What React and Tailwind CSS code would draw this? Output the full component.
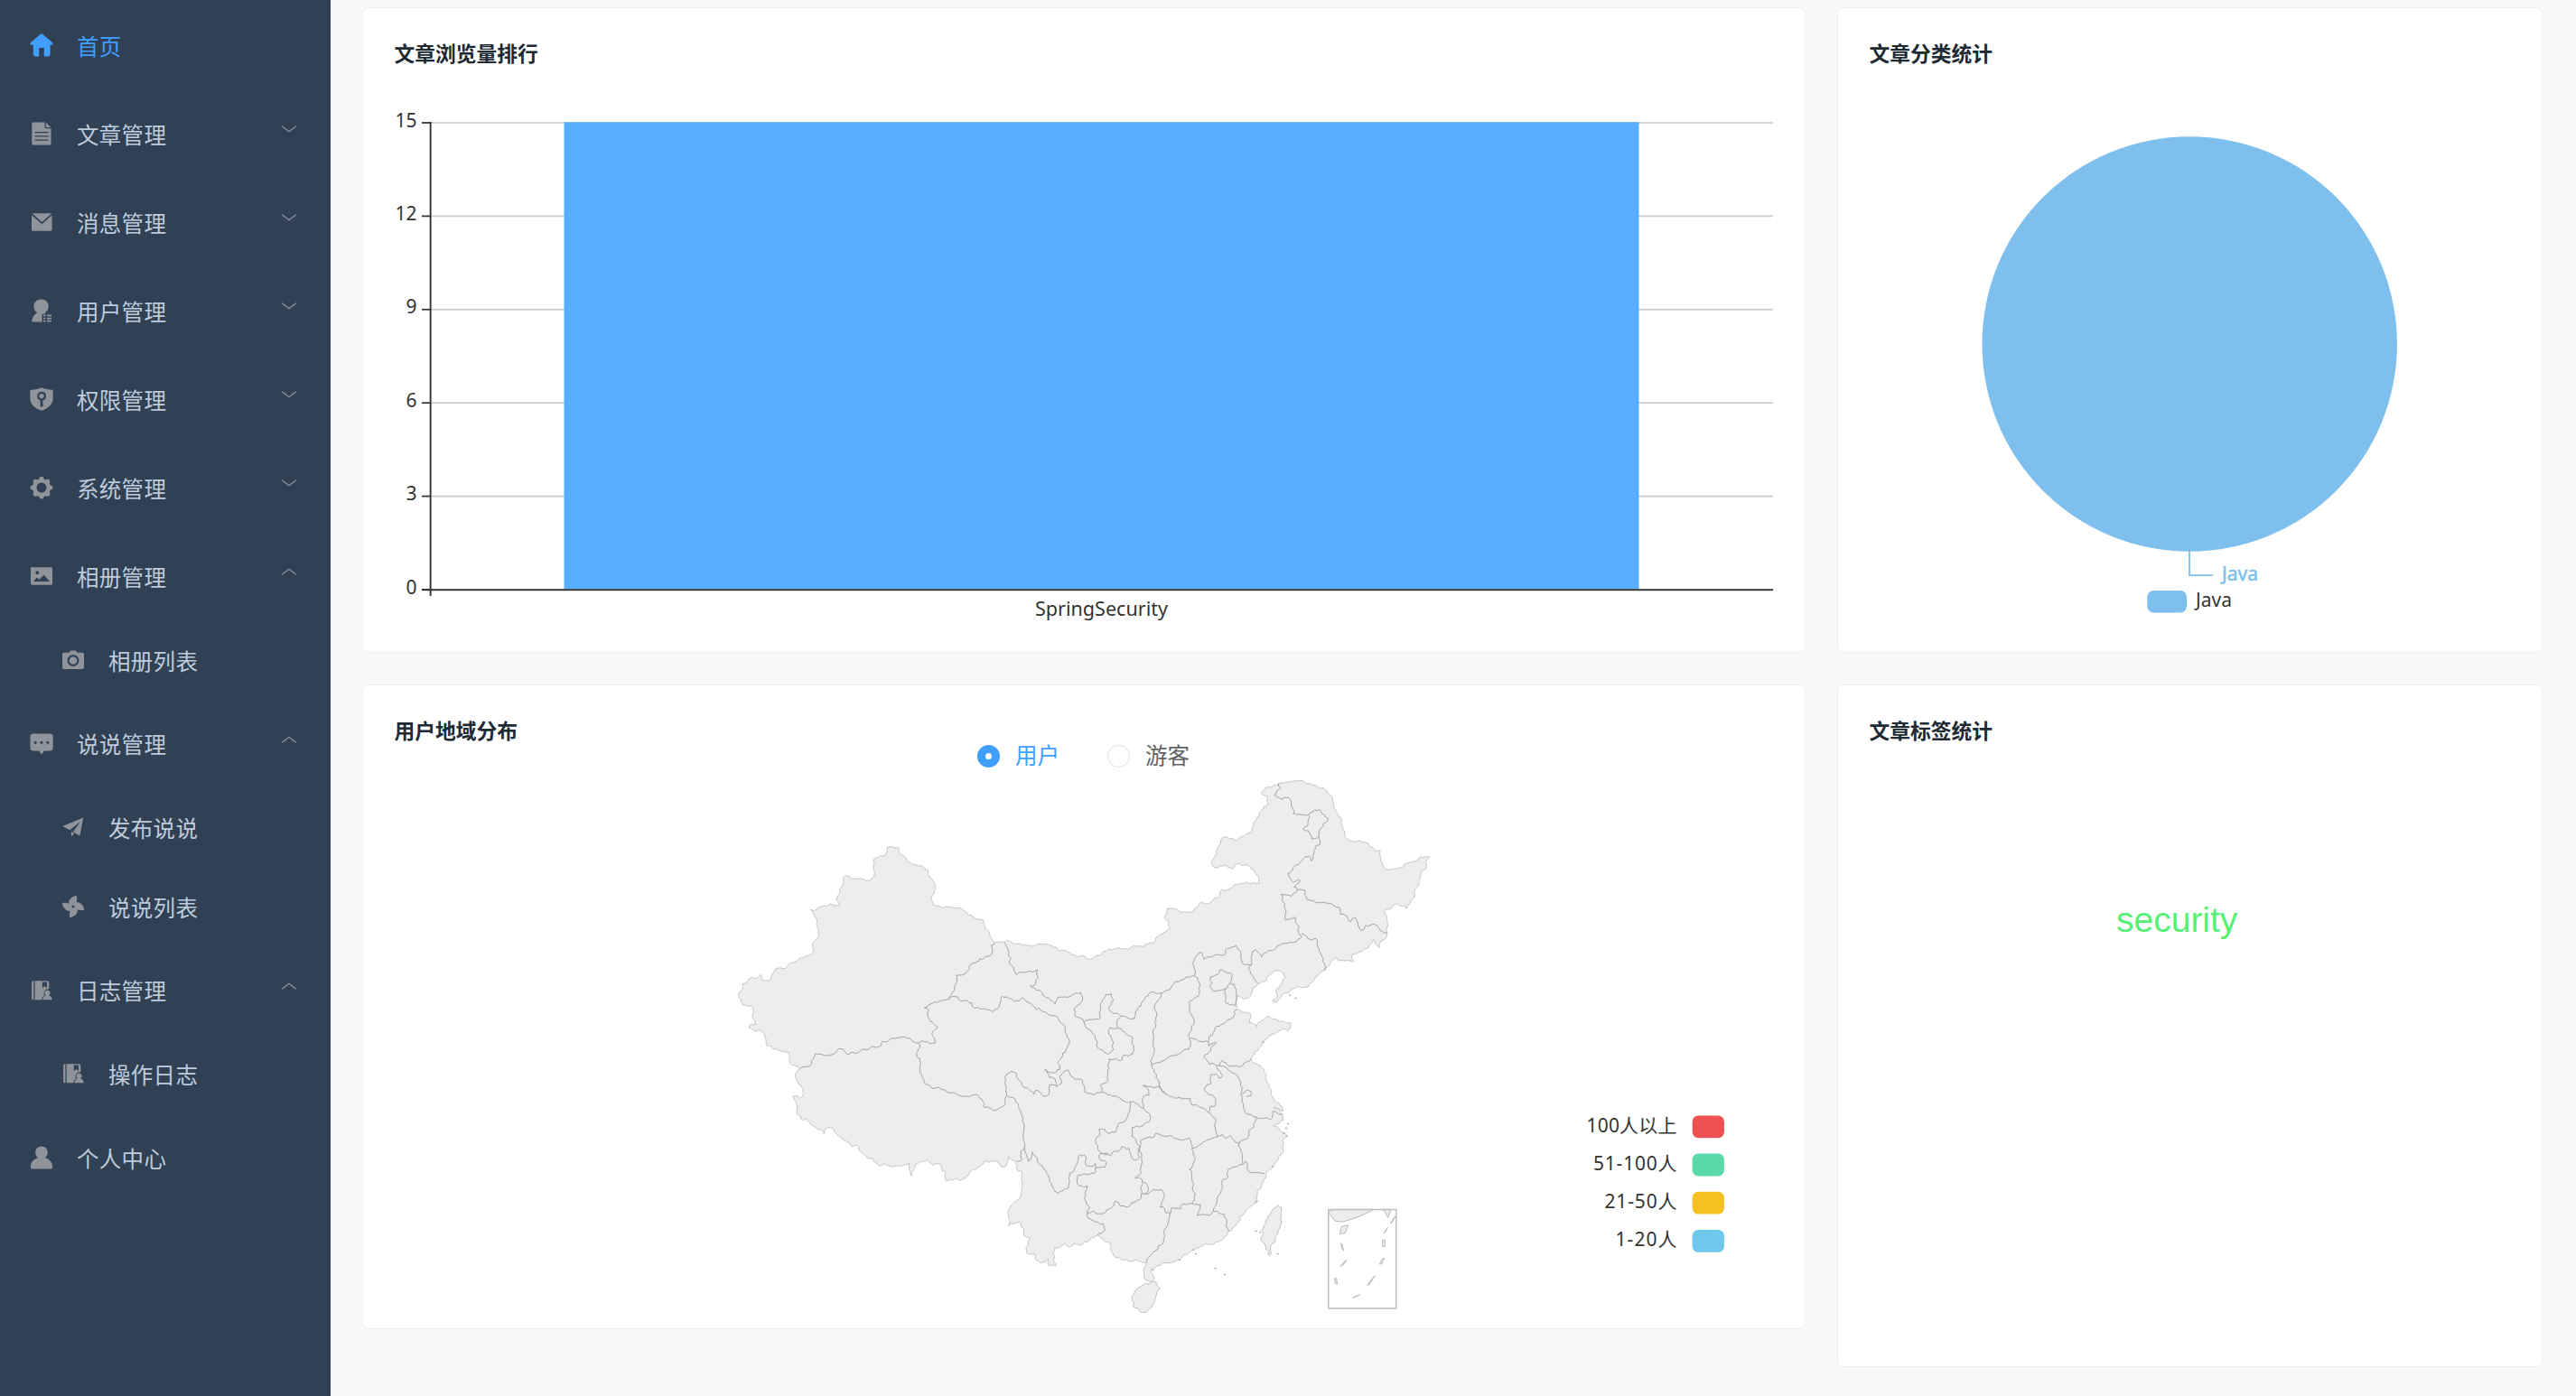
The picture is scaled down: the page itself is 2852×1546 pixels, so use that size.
import React from "react";

const CJK = "font-['Noto_Sans','Noto_Sans_CJK_SC',sans-serif]";

/* ---------- sidebar icons (26 x 26 grid) ---------- */
const icons = {
  home: (
    <path d="M11.6.9a2 2 0 0 1 2.8 0l10.8 9.3c.7.9.3 2.3-.9 2.5h-1.7v10.1c0 1.6-1 2.7-2.6 2.7h-4.2v-9.4h-5.600v9.400H6.400c-1.600 0-2.600-1.100-2.600-2.700V12.700H1.800c-1.200-.2-1.700-1.600-.9-2.500z" />
  ),
  doc: (
    <path fillRule="evenodd" d="M3.600.5h12.900v4.800c0 1.200.8 2 2 2h5V24c0 .8-.6 1.500-1.400 1.500H3.700c-.8 0-1.400-.7-1.400-1.500V2c0-.8.5-1.500 1.300-1.500zM5.600 11v1.200h15V11zm0 4.300v1.200h15v-1.200zm0 4.300v1.200h15v-1.200zM17.800.7l5.400 5.200h-4.400c-.6 0-1-.4-1-1z" />
  ),
  mail: (
    <path d="M2.600 3.300h21.800L13.500 12.900zM2 5.200l11.500 10.100L24.500 5.200v16c0 .9-.6 1.500-1.500 1.500H3.500c-.9 0-1.500-.6-1.500-1.500z" />
  ),
  userList: (
    <path d="M12.600.4c4.700 0 8.200 3.300 8.200 7.700 0 2.900-1.400 5.700-3.800 7.200v1.300h-1.700c-1.300 0-2 .9-1.700 2.100l.3 1-.7 1.500.8 1.200-.6 1.200.4 1.900H2.300c.2-4.600 2.500-8.500 5.900-10.200-2.300-1.400-3.800-4.200-3.800-7.200 0-4.400 3.500-7.700 8.200-7.700zM15 17.600h2.500v1.700H15zm4 0h5v1.700h-5zm-4 3.100h2.500v1.700H15zm4 0h5v1.700h-5zm-4 3.100h2.500v1.700H15zm4 0h5v1.700h-5z" />
  ),
  shield: (
    <path fillRule="evenodd" d="M13 .2c3.500 1.500 7.600 2.300 12 2.500.4 0 .6.300.6.700v9.200c0 6-5.200 11-12.600 13.100C5.600 23.600.4 18.600.4 12.600V3.400c0-.4.200-.7.600-.7C5.400 2.500 9.500 1.700 13 .2zm0 4.500a5 5 0 0 0-1.400 9.700v7h1.700l2.100-1.500-1.300-1.400.3-.8v-3.200A5 5 0 0 0 13 4.700zm0 2.200a2.700 2.700 0 1 1 0 5.400 2.700 2.700 0 0 1 0-5.400z" />
  ),
  gear: (
    <path fillRule="evenodd" d="M10.700 2.300c.5-2 4.100-2 4.600 0 .5 1.900 2 2.500 3.700 1.700 1.800-.9 4 1.300 3.200 3.100-.8 1.800 0 3.300 1.700 3.700 2.100.5 2.100 3.900 0 4.400-1.700.5-2.500 2-1.700 3.700.9 2-1.300 4.600-3.200 3.700-1.700-.8-3.200 0-3.700 1.500-.5 1.900-4.100 1.900-4.600 0-.5-1.500-2-2.300-3.700-1.500-1.900.9-4.100-1.700-3.200-3.700.8-1.700 0-3.200-1.700-3.700-2.100-.5-2.100-3.900 0-4.400 1.700-.4 2.500-1.900 1.700-3.700C3 5.300 5.200 3.100 7 4c1.700.8 3.200.2 3.700-1.700zM13 7.500a5.500 5.500 0 1 0 0 11 5.500 5.500 0 0 0 0-11z" />
  ),
  image: (
    <path fillRule="evenodd" d="M2.200 3.300h21.600c.7 0 1.200.5 1.200 1.200v17c0 .7-.5 1.200-1.200 1.200H2.200c-.7 0-1.200-.5-1.200-1.200v-17c0-.7.500-1.200 1.200-1.200zm6.100 4a1.900 1.900 0 1 0 0 3.800 1.900 1.900 0 0 0 0-3.800zM4 19h18l-6.300-7.300-5.300 5-2.600-2.300z" />
  ),
  camera: (
    <path fillRule="evenodd" d="M8.500 4.700 9.700 3c.3-.4.700-.6 1.200-.6h4.200c.5 0 .9.200 1.200.6l1.200 1.700H23c1.100 0 2 .9 2 2v14.400c0 1.100-.9 2-2 2H3c-1.100 0-2-.9-2-2V6.700c0-1.100.9-2 2-2zM13 7a6.500 6.500 0 1 0 0 13 6.500 6.500 0 0 0 0-13zm0 2.200a4.300 4.300 0 1 1 0 8.600 4.300 4.300 0 0 1 0-8.600z" />
  ),
  chat: (
    <path fillRule="evenodd" d="M3.500 1.600h19.200c1.700 0 3 1.300 3 3v13c0 1.700-1.300 3-3 3h-6.600L13 24.400l-3.100-3.800H3.500c-1.700 0-3-1.300-3-3v-13c0-1.700 1.300-3 3-3zM6.200 9.700a1.600 1.600 0 1 0 0 3.200 1.600 1.600 0 0 0 0-3.200zm6.800 0a1.600 1.600 0 1 0 0 3.200 1.600 1.600 0 0 0 0-3.200zm6.800 0a1.600 1.600 0 1 0 0 3.200 1.600 1.600 0 0 0 0-3.200z" />
  ),
  plane: (
    <path d="M24.200 2.600 20.400 22.800 12.900 18.200 21.200 6.800 9.400 16.300 1.200 11.900zM10.700 17.800l3.600 2.200-3 3.300z" />
  ),
  fan: (
    <g>
      {[0, 90, 180, 270].map((r) => (
        <path key={r} transform={`rotate(${r} 13 13)`} d="M16.700.9c1 3.600.5 7.400-2.200 10.100-2.200 1.600-5.600 1.100-6.300-1.300C7.500 5.800 11.500 1.200 16.700.9z" />
      ))}
    </g>
  ),
  log: (
    <g>
      <path d="M4.400 2.300v21H4c-1.100 0-1.900-.8-1.900-1.900V4.200c0-1.100.8-1.900 1.900-1.900z" />
      <path fillRule="evenodd" d="M5.600 2.300h13.700c1.100 0 2 .9 2 2v7.200a4.700 4.700 0 0 0-5.800 4.500c0 1 .3 1.900.8 2.600-1.900.9-2.800 2.500-3 4.700H5.600zM13.800 3.400v6.800l2.600-2.300 2.600 2.300V3.400z" />
      <path d="M19.400 12.600c1.800 0 3.100 1.400 3.100 3 0 1.300-.6 2.200-1.400 2.800 2 .5 3.500 1.900 3.500 4.900H14.400c0-3 1.400-4.400 3.400-4.900-.9-.6-1.500-1.500-1.500-2.800 0-1.600 1.400-3 3.100-3z" />
    </g>
  ),
  user: (
    <path d="M13 .6c3.900 0 6.800 2.900 6.800 6.600 0 2.600-1.200 4.900-3.200 6 4.800 1 8.400 4.700 8.400 9.500v1.200c0 1-.6 1.600-1.600 1.600H2.600c-1 0-1.600-.6-1.600-1.600v-1.200c0-4.800 3.600-8.500 8.400-9.500-2-1.100-3.200-3.400-3.200-6C6.200 3.500 9.100.6 13 .6z" />
  ),
};

const menu = [
  { icon: "home", label: "首页", active: true },
  { icon: "doc", label: "文章管理", arrow: "down" },
  { icon: "mail", label: "消息管理", arrow: "down" },
  { icon: "userList", label: "用户管理", arrow: "down" },
  { icon: "shield", label: "权限管理", arrow: "down" },
  { icon: "gear", label: "系统管理", arrow: "down" },
  { icon: "image", label: "相册管理", arrow: "up" },
  { icon: "camera", label: "相册列表", sub: true },
  { icon: "chat", label: "说说管理", arrow: "up" },
  { icon: "plane", label: "发布说说", sub: true },
  { icon: "fan", label: "说说列表", sub: true },
  { icon: "log", label: "日志管理", arrow: "up" },
  { icon: "log", label: "操作日志", sub: true },
  { icon: "user", label: "个人中心" },
];

function MenuItem({ icon, label, active, arrow, sub }) {
  return (
    <div className={`flex shrink-0 items-center pr-[37px] ${sub ? "h-[87.5px] pl-[67.5px]" : "h-[98px] pl-[32.5px]"} ${active ? "text-[#409eff]" : "text-[#bfcbd9]"}`}>
      <svg viewBox="0 0 26 26" className={`mb-[2px] h-[26px] w-[26px] shrink-0 ${active ? "fill-[#409eff]" : "fill-[#909399]"}`}>
        {icons[icon]}
      </svg>
      <span className="ml-[26.5px] flex-1 pt-[2px] text-[24.5px] leading-none tracking-[0.3px]">{label}</span>
      {arrow && (
        <svg viewBox="0 0 18 10" className="mb-[12px] h-[10px] w-[18px] fill-none stroke-[#909399]" strokeWidth="1.3">
          <path d={arrow === "down" ? "M1.300 1.700 9 7.700l7.700-6" : "M1.300 8.200 9 2.200l7.700 6"} />
        </svg>
      )}
    </div>
  );
}

/* ---------- map geometry ---------- */
const frames = {
  W: [800, 900, 3, 3],
  E: [1200, 840, 3, 2.376],
  S: [1080, 1180, 3, 3],
};
const pts = (frame, str) => {
  const [ox, oy, sx, sy] = frames[frame];
  return str.trim().split(/\s+/).map((p) => {
    const [x, y] = p.split(",").map(Number);
    return [ox + x / sx, oy + y / sy];
  });
};
const noise = (x, y) => {
  const v = Math.sin(x * 12.9898 + y * 78.233) * 43758.5453;
  return (v - Math.floor(v)) * 2 - 1;
};
const roughen = (a, b, depth) => {
  const dx = b[0] - a[0];
  const dy = b[1] - a[1];
  const len = Math.hypot(dx, dy);
  if (depth === 0 || len < 3) return [b];
  const k = noise(a[0] + b[0], a[1] + b[1]) * Math.min(0.22, 1.6 / len);
  const m = [(a[0] + b[0]) / 2 - dy * k, (a[1] + b[1]) / 2 + dx * k];
  return [...roughen(a, m, depth - 1), ...roughen(m, b, depth - 1)];
};
const toPath = (list, close) => {
  let out = [list[0]];
  for (let i = 1; i < list.length; i++) out = out.concat(roughen(list[i - 1], list[i], 3));
  return "M" + out.map((p) => p[0].toFixed(1) + " " + p[1].toFixed(1)).join("L") + (close ? "Z" : "");
};

const outline = [
  ...pts("W", "52,603 62,590 66,568 80,565 98,548 115,550 127,538 132,555 160,552 174,520 208,518 226,500 262,482 300,466 303,430 320,410 312,375 306,338 292,322 330,312 358,302 388,310 378,290 392,250 406,210 430,220 470,220 480,226 503,214 500,160 510,150 540,142 548,115 585,114 590,135 612,160 635,172 665,178 682,190 688,215 704,235 703,268 692,290 700,306 730,316 795,320 830,342 850,354 867,357 870,372 886,404 905,432 935,430 980,436 1020,441 1073,436 1108,446 1120,460 1145,463 1175,477 1206,480 1225,488"),
  ...pts("E", "60,512 115,498 200,495 230,485 252,463 287,447 268,420 278,395 303,394 320,404 350,405 370,393 385,380 420,380 448,365 458,345 490,340 520,328 560,328 583,330 582,318 555,290 535,280 515,276 490,290 470,282 435,288 422,275 464,206 505,216 530,205 556,195 560,180 588,140 613,118 610,100 590,92 610,75 645,66 680,62 720,58 745,66 775,73 795,77 815,95 830,118 845,148 860,185 878,213 915,216 945,224 965,240 985,243 985,258 998,288 1030,290 1055,287 1075,275 1105,268 1150,260 1135,272 1138,288 1118,305 1105,340 1085,375 1074,394 1030,384 998,402 1006,425 1008,460 1000,475 985,480 982,497 960,476 945,498 920,508 892,515 895,535 870,532 838,525 800,558 770,575 743,602 700,605 650,633 630,642 628,635 645,625 637,610 655,595 670,575 655,560 630,560 605,585 580,593 562,602 550,628 530,634 505,625 508,650 505,662 545,668 556,680 548,695 575,706 600,685 618,680 650,692 685,695 680,715 655,714 625,725 598,745 575,770 556,792 598,818 620,870 622,885 658,915 662,928 630,917 660,936 662,952 628,965 650,975 672,990 658,1005 660,1025 645,1055 628,1072 605,1097 590,1125 575,1140 578,1165 550,1180 520,1205 500,1232 480,1243 465,1262 440,1272 400,1278 368,1290 350,1300 318,1318 270,1328 225,1342 222,1350 234,1368 228,1375 208,1374 200,1345 207,1325 170,1320 120,1315 100,1308 90,1295 88,1275"),
  ...pts("S", "405,564 380,575 378,582 350,598 330,592 312,604 295,592 280,604 262,604 260,630 268,665 245,667 242,643 215,655 200,645 196,625 170,622 182,575 160,567 158,540 152,523 130,524 110,532 108,490 118,465 135,450 150,435 153,385 150,350 137,345 133,320 118,310 110,302 100,335 85,335 60,318 30,318 0,345"),
  ...pts("W", "825,1190 805,1215 790,1222 745,1224 742,1195 728,1188 722,1166 700,1172 690,1162 655,1158 640,1170 628,1206 620,1185 622,1165 590,1175 560,1176 540,1166 520,1172 500,1150 488,1150 455,1125 446,1104 428,1108 395,1082 370,1053 345,1048 337,1067 325,1053 295,1038 278,1016 262,1020 248,1002 246,970 234,942 248,940 256,950 266,940 260,905 247,890 246,862 256,852 230,838 220,795 195,793 160,775 150,775 140,738 120,722 88,714 90,706 110,704 100,670 98,643 66,640 52,603"),
];

const borders = [
  ["W", "905,432 893,440 893,472 864,488 855,484 828,500 808,534 776,541 766,595 754,612 752,620 690,636 670,648 685,655 686,684 714,715 695,735 706,765 668,760 650,765 605,745 570,750 530,760 518,778 490,782 450,798 410,800 400,786 385,785 365,804 308,800 288,842 256,852"],
  ["W", "935,430 958,485 952,497 978,538 1010,530 1045,522 1048,545 1038,572 1022,575 1055,592 1075,615 1105,636 1112,615 1150,612 1190,597 1196,615 1188,635 1168,650 1168,672 1200,696"],
  ["W", "754,616 782,612 787,623 828,632 836,650 880,654 900,660 915,650 928,610 970,627 998,616 1042,655 1050,648 1080,670 1115,685 1136,710 1152,765 1140,795 1128,800 1112,830 1122,852 1105,864 1070,852 1085,880 1105,885 1108,910"],
  ["W", "650,765 656,780 646,810 658,830 655,865 690,910 720,914 750,930 820,944 840,937 865,960 870,980 895,986 920,982 940,965 944,940 942,870 960,860 975,865 998,910 1035,935 1040,922 1065,942 1083,936 1086,905 1108,910 1125,900 1125,870 1148,855 1160,878 1195,888 1203,928 1230,937 1258,928"],
  ["W", "944,940 968,948 990,990 1000,1030 1004,1110"],
  ["S", "163,270 150,285 155,312 137,318"],
  ["S", "163,270 166,290 175,318 188,287 205,320 225,340 245,380 275,424 308,408 312,360 330,340 345,298 362,297 366,330 390,335 398,325 400,340 430,338 435,322 412,310 412,295 440,292"],
  ["S", "515,120 512,150 498,185 480,190 465,222 440,225 430,212 410,212 410,235 398,250 412,285 440,295 447,300 460,285 475,285 485,270 510,275 515,290 530,315 545,305 548,270"],
  ["S", "515,120 558,142 578,160 578,185 555,202 520,206 518,235 532,245 547,270"],
  ["S", "418,88 430,90 470,103 485,115 515,120"],
  ["S", "418,88 415,65 440,50 445,10 440,0"],
  ["S", "398,340 395,358 365,360 340,365 337,385 345,400 372,400 362,440 378,470 372,492"],
  ["S", "372,492 395,485 425,492 435,480 460,465 465,450 480,465 505,470 520,455 550,440 550,430 560,425"],
  ["S", "372,492 375,508 395,520 425,525 430,545 405,564"],
  ["S", "547,270 550,340 548,360 530,373 553,378 552,400 550,430"],
  ["S", "553,385 568,392 572,420 560,428"],
  ["S", "560,425 575,425 590,412 618,412 625,440 612,470 628,475 632,490 648,490"],
  ["S", "648,490 640,520 628,545 625,585 600,615 580,632 568,655"],
  ["S", "648,490 652,472 680,478 690,458 720,458"],
  ["S", "720,458 725,420 718,370 710,345 730,310 718,275"],
  ["S", "720,458 748,462 735,498 780,497 790,485"],
  ["S", "790,485 803,440 820,405 820,380 838,372 840,345 888,327"],
  ["S", "790,485 805,485 828,495 832,530 842,550"],
  ["S", "547,270 548,250 590,240 600,225 640,235 685,248 710,240 720,275"],
  ["S", "720,275 750,260 800,238"],
  ["S", "612,68 630,95 670,108 715,110 718,130 775,157"],
  ["S", "558,142 558,102 578,98 575,80 555,68 612,68"],
  ["S", "775,157 798,178 797,210 802,238"],
  ["S", "802,238 820,228 830,242 845,232 878,255"],
  ["S", "775,157 780,135 795,135 793,105 775,98 760,75 782,60 782,30 800,28 810,42 820,35 800,5"],
  ["S", "878,255 905,240 910,215 925,205 933,172"],
  ["S", "878,255 875,270 887,295 888,327 897,318 905,350 935,355 960,357"],
  ["E", "645,66 653,78 632,97 660,108 678,102 688,110 695,145 720,148 745,148 783,134 812,158 792,180 780,205 783,228 768,232 755,270 748,257 712,280 678,302 695,325 720,322 708,330 698,338 710,345"],
  ["E", "745,148 742,178 728,185 748,192 757,212 780,205"],
  ["E", "710,345 735,347 740,370 775,380 798,378 830,388 848,392 852,410 868,412 885,430 900,418 920,453 935,440 968,437 985,453 1008,458"],
  ["E", "710,345 690,362 655,357 665,390 670,425 702,418 715,445 715,462 723,470"],
  ["E", "723,470 700,483 655,490 620,505 590,522 570,502 560,508 558,540 548,555 578,592"],
  ["E", "723,462 755,478 768,473 785,510 800,558"],
  ["E", "558,542 528,540 520,508 505,492 475,500 470,515 430,520 398,528 390,510 372,520 360,540 368,572"],
  ["E", "368,572 330,582 300,590 285,608 258,618"],
  ["E", "368,572 380,585 380,625 350,640 350,665 365,685 350,735"],
  ["E", "350,737 348,765 290,782 225,806"],
  ["E", "258,618 235,660 240,680 230,715 235,770 225,806"],
  ["E", "225,806 250,860 268,880"],
  ["E", "258,618 222,615 200,635 172,665 168,685 123,678"],
  ["E", "0,694 55,682 60,640 75,620 92,618 98,635 83,660 123,678 112,688 112,708 88,708 82,725 98,748 98,765 80,778 42,755 38,730 0,694"],
  ["E", "112,708 130,718 162,735 162,778 130,782 128,793 85,790 80,808"],
  ["E", "350,737 412,745 415,732 440,705 500,675 505,660"],
  ["E", "412,745 415,757 440,748 398,785 418,805 450,808 460,795 480,808 518,812 556,792"],
  ["E", "450,808 480,820 510,835 520,860 525,890 530,915 540,935 572,943 620,950 628,928 660,936"],
  ["E", "525,885 540,872 555,876 555,888 540,890"],
  ["E", "420,575 445,568 458,555 475,565 492,568 485,590 475,605 430,612 418,600 425,590 420,575"],
  ["E", "485,590 500,595 508,625 503,650 470,640 468,605"],
];

const islands = [
  ["S", "555,730 600,720 612,742 598,770 590,792 558,820 525,803 521,765 540,738 555,730"],
  ["E", "645,1175 658,1182 655,1215 640,1255 620,1290 615,1308 605,1290 590,1270 590,1240 610,1205 645,1175"],
];
const inset = [
  ["E", "812,1195 828,1187 962,1187 918,1204 862,1219 835,1217 812,1195"],
  ["E", "996,1187 1010,1208 1020,1187"],
  ["E", "856,1232 878,1228 868,1248 850,1251 856,1232"],
  ["E", "1034,1205 1018,1223 1022,1222 1034,1207"],
  ["E", "1009,1234 997,1248 1000,1248 1009,1234"],
  ["E", "992,1267 1000,1267 1000,1284 992,1284 992,1267"],
  ["E", "853,1276 858,1278 863,1295 859,1292 853,1276"],
  ["E", "874,1320 866,1323 853,1336 860,1333 874,1320"],
  ["E", "998,1315 990,1317 982,1331 989,1330 998,1315"],
  ["E", "832,1368 839,1368 842,1384 837,1382 832,1368"],
  ["E", "967,1361 958,1368 942,1386 949,1383 967,1361"],
  ["E", "917,1411 892,1420 896,1418 917,1411"],
];
const specks = ["684,622", "704,630", "678,960", "672,972", "663,985", "674,992", "572,1243", "586,1246", "644,1302", "372,1302", "437,1341", "468,1357", "318,1318", "572,1165", "628,1072", "596,745", "230,1345", "362,1292"];

const raw = (f, s) => "M" + pts(f, s).map((p) => p.join(" ")).join("L");

function ChinaMap() {
  return (
    <g strokeWidth="1" strokeLinejoin="round">
      <path d={toPath(outline, true)} fill="#ededed" stroke="#c6c6c6" />
      {islands.map(([f, s], i) => (
        <path key={i} d={toPath(pts(f, s), true)} fill="#ededed" stroke="#c0c0c0" />
      ))}
      {borders.map(([f, s], i) => (
        <path key={i} d={toPath(pts(f, s), false)} fill="none" stroke="#a4a4a4" />
      ))}
      {specks.map((s) => {
        const [[x, y]] = pts("E", s);
        return <path key={s} d={`M${x - 1} ${y}l2 .8`} stroke="#a8a8a8" strokeWidth="1.3" />;
      })}
      {inset.map(([f, s], i) => (
        <path key={i} d={raw(f, s)} fill="#ededed" stroke="#b8b8b8" />
      ))}
      <rect x="1470.800" y="1339.500" width="75" height="109.500" fill="none" stroke="#bdbdbd" strokeWidth="1.500" />
    </g>
  );
}

/* ---------- cards ---------- */
function Card({ title, className, children }) {
  return (
    <section className={`relative overflow-hidden rounded-[7px] border border-[#ebeef5] bg-white ${className}`}>
      <h2 className="px-[34.5px] pt-[34px] text-[22.75px] leading-[34px] font-bold text-[#202a34]">{title}</h2>
      {children}
    </section>
  );
}

const ticks = [15, 12, 9, 6, 3, 0];

function BarChart() {
  return (
    <svg viewBox="402 77 1596 644" className="h-[644px] w-[1596px]" fontSize="21">
      {ticks.map((t, i) => (
        <g key={t}>
          <rect x="476" y={135.1 + i * 103.4} width="1487" height="1.750" fill="#ccc" />
          <rect x="467" y={135.1 + i * 103.4} width="9" height="1.750" fill="#333" />
          <text x="461.500" y={140.6 + i * 103.4} textAnchor="end" fill="#333">{t}</text>
        </g>
      ))}
      <rect x="624.500" y="135.300" width="1190" height="517" fill="#58adff" />
      <rect x="475.700" y="135" width="1.900" height="525" fill="#333" />
      <rect x="467" y="652.300" width="1496" height="1.900" fill="#333" />
      <text x="1219.500" y="682" textAnchor="middle" textLength="147" lengthAdjust="spacingAndGlyphs" fill="#333">SpringSecurity</text>
    </svg>
  );
}

function PieChart() {
  return (
    <svg viewBox="2035 77 778 644" className="h-[644px] w-[778px]" fontSize="21">
      <circle cx="2424.200" cy="381" r="229.700" fill="#7ebfed" />
      <path d="M2424 610v27h26" fill="none" stroke="#7ebfed" strokeWidth="1.750" />
      <text x="2460" y="642.500" fill="#7ebfed" stroke="#7ebfed" strokeWidth=".5">Java</text>
      <rect x="2377.300" y="654" width="43.700" height="24.500" rx="7" fill="#7ebfed" />
      <text x="2431" y="671.500" fill="#333">Java</text>
    </svg>
  );
}

const levels = [
  ["100人以上", "#ee5351", 100],
  ["51-100人", "#5adaa8", 92.5],
  ["21-50人", "#f6bf22", 80],
  ["1-20人", "#6dc8ec", 68],
];

function UserMap() {
  return (
    <svg viewBox="402 828 1596 643" className="absolute bottom-0 left-0 h-[643px] w-[1596px]" fontSize="21">
      <ChinaMap />
      {levels.map(([label, color, width], i) => (
        <g key={label}>
          <text x={1856.5 - width} y={1253.500 + i * 42.2} textLength={width} fill="#333">{label}</text>
          <rect x="1873.700" y={1235.400 + i * 42.2} width="35.200" height="24.800" rx="6.500" fill={color} />
        </g>
      ))}
    </svg>
  );
}

export default function App() {
  return (
    <div className={`flex h-[1546px] w-[2852px] overflow-hidden bg-[#f8f9fb] ${CJK}`}>
      <aside className="flex w-[366px] shrink-0 flex-col bg-[#304156] pt-[2px]">
        {menu.map((m) => (
          <MenuItem key={m.label} {...m} />
        ))}
      </aside>
      <main className="flex flex-1 gap-[35px] pt-[8px] pl-[35px]">
        <div className="flex w-[1598px] shrink-0 flex-col gap-[35px]">
          <Card title="文章浏览量排行" className="h-[715px]">
            <BarChart />
          </Card>
          <Card title="用户地域分布" className="h-[714px]">
            <UserMap />
            <div className="relative -mt-[7px] flex items-center pl-[680px] text-[24.5px] leading-[34px]">
              <span className="flex h-[25px] w-[25px] items-center justify-center rounded-full bg-[#409eff]">
                <span className="h-[7px] w-[7px] rounded-full bg-white" />
              </span>
              <span className="ml-[17px] text-[#409eff]">用户</span>
              <span className="ml-[53px] h-[25px] w-[25px] rounded-full border border-[#dcdfe6]" />
              <span className="ml-[17px] text-[#606266]">游客</span>
            </div>
          </Card>
        </div>
        <div className="flex w-[781px] shrink-0 flex-col gap-[35px]">
          <Card title="文章分类统计" className="h-[715px]">
            <PieChart />
          </Card>
          <Card title="文章标签统计" className="h-[756px]">
            <div className="mt-[170px] pl-[308px] font-['Liberation_Sans',Arial,sans-serif] text-[39px] leading-[44px] text-[#55f176]">security</div>
          </Card>
        </div>
      </main>
    </div>
  );
}
